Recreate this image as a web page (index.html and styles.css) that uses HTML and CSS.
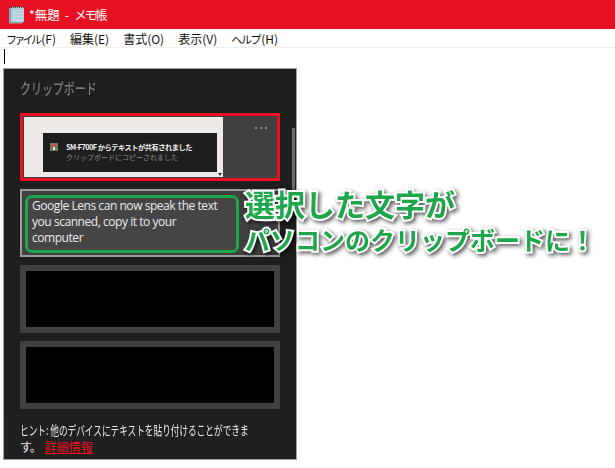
FILE: index.html
```html
<!DOCTYPE html>
<html lang="ja">
<head>
<meta charset="utf-8">
<title>*無題 - メモ帳</title>
<link rel="stylesheet" href="styles.css">
</head>
<body>
<div class="window">
  <header class="titlebar">
    <svg class="app-icon" width="16" height="18" viewBox="0 0 16 18">
      <rect x="0" y="2" width="14" height="15" fill="#7fa9b8"/>
      <rect x="2" y="1" width="13" height="15" fill="#a9cad6"/>
      <rect x="4" y="4" width="10" height="11" fill="#c4dde6"/>
      <path d="M6 6h7M6 9h7M6 12h7" stroke="#9dbcc8" stroke-width="1"/>
      <path d="M2 1h13" stroke="#4a4a4a" stroke-width="2" stroke-dasharray="1 1"/>
      <path d="M0 17h13" stroke="#a3ad8c" stroke-width="1"/>
    </svg>
    <span class="title"><span>*無題</span><span>-</span><span class="title-kana">メモ帳</span></span>
  </header>
  <nav class="menubar">
    <span><span class="kana-four">ファイル</span>(F)</span><span>編集(E)</span><span>書式(O)</span><span>表示(V)</span><span><span class="kana-three">ヘルプ</span>(H)</span>
  </nav>
  <main class="editor"><div class="caret"></div></main>
</div>

<aside class="panel">
  <h2 class="panel-title"><span class="panel-title-text">クリップボード</span></h2>
  <div class="scrollbar"></div>
  <ul class="cards">
    <li class="card card-active">
      <div class="shot">
        <div class="toast">
          <svg class="toast-icon" width="8" height="8" viewBox="0 0 8 8">
            <rect width="8" height="8" fill="#6f7f62"/>
            <rect x="2" y="1" width="4" height="3" fill="#c9584a"/>
            <rect x="3" y="4" width="2" height="3" fill="#e3e0d0"/>
          </svg>
          <div class="toast-text">
            <div class="toast-head">SM-F700F からテキストが共有されました</div>
            <div class="toast-sub">クリップボードにコピーされました</div>
          </div>
        </div>
        <span class="shot-arrow"></span>
      </div>
      <span class="dots"><i></i><i></i><i></i></span>
    </li>
    <li class="card card-text">
      <div class="highlight">Google Lens can now speak the text you scanned, copy it to your computer</div>
    </li>
    <li class="card card-hidden"></li>
    <li class="card card-hidden"></li>
  </ul>
  <footer class="hint">
    <div class="hint-one">ヒント: 他のデバイスにテキストを貼り付けることができま</div>
    <div class="hint-two"><span class="hint-end">す。</span><a class="hint-link">詳細情報</a></div>
  </footer>
</aside>

<div class="note">
  <div class="note-one">選択した文字が</div>
  <div class="note-two">パソコンのクリップボードに！</div>
</div>
</body>
</html>
```
FILE: styles.css
```css
* { box-sizing: border-box; }
html, body { margin: 0; padding: 0; }
body {
  width: 615px;
  height: 468px;
  overflow: hidden;
  background: #fff;
  position: relative;
  font-family: "Noto Sans CJK JP", "Open Sans", sans-serif;
}
.titlebar {
  height: 29px;
  background: #e81123;
  display: flex;
  align-items: center;
  padding-left: 9px;
  gap: 4px;
  color: #fff;
}
.app-icon { flex: none; }
.title { display: flex; gap: 5px; white-space: nowrap; font-size: 12.5px; }
.title-kana { letter-spacing: -2.2px; }
.menubar {
  height: 19px;
  display: flex;
  gap: 14px;
  padding-left: 6px;
  align-items: center;
  font-size: 12px;
  color: #111;
  border-bottom: 1px solid #f0f0f0;
}
.kana-four { font-size: 11px; letter-spacing: -2.7px; margin-right: 2px; }
.kana-three { font-size: 11px; letter-spacing: -1.3px; margin-right: 1px; }
.editor { padding: 1px 0 0 4px; }
.caret { width: 1px; height: 15px; background: #000; }

.panel {
  position: absolute;
  left: 3px;
  top: 68px;
  width: 294px;
  height: 392px;
  background: #1e1e1e;
  border: 1px solid #a0a0a0;
  display: flex;
  flex-direction: column;
}
.panel-title {
  margin: 0;
  padding: 9px 0 0 16px;
  height: 44px;
  font-size: 15px;
  line-height: 20px;
  font-weight: 500;
  color: #7c7c7c;
}
.panel-title-text {
  display: inline-block;
  transform: scaleX(.73);
  transform-origin: left center;
}
.scrollbar {
  position: absolute;
  left: 288px;
  top: 59px;
  width: 3px;
  height: 62px;
  background: #6a6a6a;
}
.cards {
  list-style: none;
  margin: 0;
  padding: 0 0 0 16px;
  display: flex;
  flex-direction: column;
  gap: 8px;
  height: 301px;
}
.card {
  width: 260px;
  height: 68px;
  flex: none;
  position: relative;
}
.card-active {
  border: 3px solid #e81123;
  background: #404040;
  padding: 1px 0 0 1px;
}
.shot {
  width: 199px;
  height: 60px;
  background: #eeeae7;
  padding: 16px 6px 5px 19px;
  position: relative;
}
.shot-arrow {
  position: absolute;
  right: 1px;
  bottom: 1px;
  border-left: 2px solid transparent;
  border-right: 2px solid transparent;
  border-top: 3px solid #333;
}
.toast {
  height: 39px;
  background: #1e1e1e;
  display: flex;
  align-items: flex-start;
  padding: 10px 0 0 7px;
  gap: 8px;
}
.toast-icon { flex: none; }
.toast-text { line-height: 10px; white-space: nowrap; margin-top: -1px; }
.toast-head { color: #f0f0f0; font-weight: 700; font-size: 7.3px; letter-spacing: -.55px; }
.toast-sub { color: #8a8a8a; font-size: 7px; }
.dots {
  position: absolute;
  right: 10px;
  top: 11px;
  display: flex;
  gap: 3px;
}
.dots i { width: 2px; height: 2px; background: #8a8a8a; }
.card-text {
  border: 2px solid #9c9c9c;
  background: #404040;
  padding: 4px 0 0 3px;
}
.highlight {
  width: 214px;
  height: 58px;
  border: 3px solid #1ea64a;
  border-radius: 7px;
  background: #454545;
  padding: 0 10px 0 4px;
  color: #ececec;
  font-family: "Open Sans", sans-serif;
  font-size: 12px;
  letter-spacing: -.45px;
  line-height: 16px;
}
.card-hidden {
  border: 6px solid #404040;
  background: #000;
}
.hint {
  flex: 1;
  padding: 7px 0 0 16px;
  background: #202020;
  color: #e8e8e8;
  font-size: 12px;
  line-height: 17px;
  white-space: nowrap;
}
.hint-one {
  font-size: 13px;
  transform: scaleX(.665);
  transform-origin: left center;
}
.hint-two { display: flex; gap: 4px; }
.hint-end { letter-spacing: -1px; }
.hint-link {
  color: #e81123;
  text-decoration: underline;
}
.note {
  position: absolute;
  left: 245px;
  top: 184px;
  color: #1ea64a;
  font-weight: 700;
  white-space: nowrap;
  -webkit-text-stroke: 4px #fff;
  paint-order: stroke fill;
  filter: drop-shadow(2px 2px 2px rgba(0,0,0,.65));
}
.note-one { font-size: 30px; line-height: 38px; }
.note-two { font-size: 25px; line-height: 34px; }
```
